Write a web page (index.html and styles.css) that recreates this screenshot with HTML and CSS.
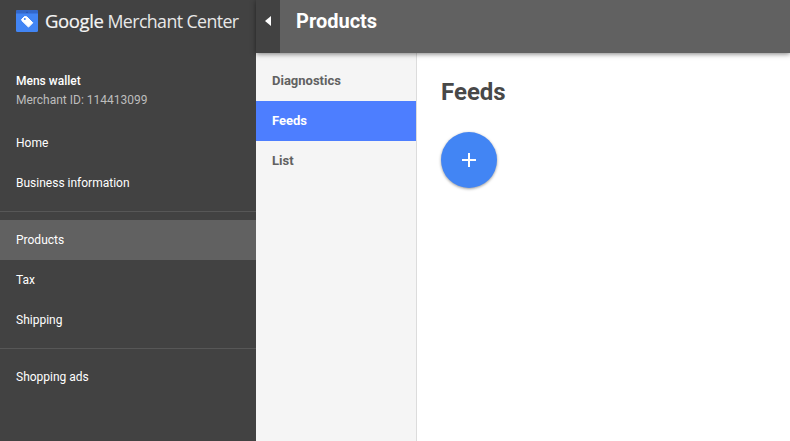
FILE: index.html
```html
<!DOCTYPE html>
<html lang="en">
<head>
<meta charset="utf-8">
<title>Google Merchant Center</title>
<link rel="stylesheet" href="styles.css">
</head>
<body>
<div class="app">
  <aside class="sidebar">
    <div class="brand">
      <svg class="brand-icon" width="22" height="22" viewBox="0 0 22 22" aria-hidden="true">
        <rect x="0" y="0" width="22" height="22" rx="1.5" fill="#4285f4"/>
        <path d="M0 1.500A1.500 1.500 0 0 1 1.500 0H20.500A1.500 1.500 0 0 1 22 1.500V3.500H0Z" fill="#3367c9"/>
        <path d="M10 2.500a1.200 1.200 0 0 1 2 0Z" fill="#22418a"/>
        <path d="M5.500 9.500L8.500 6.500L10.800 6.800L16.800 12.800L12.500 17.100L6 10.800Z" fill="#fff" stroke="#fff" stroke-width="1" stroke-linejoin="round"/>
        <circle cx="8.800" cy="9" r="1" fill="#4285f4"/>
      </svg>
      <span class="brand-text"><span class="brand-google">Google</span> Merchant Center</span>
    </div>
    <div class="account">
      <div class="account-name">Mens wallet</div>
      <div class="account-id">Merchant ID: 114413099</div>
    </div>
    <nav class="nav-group">
      <a class="nav-item">Home</a>
      <a class="nav-item">Business information</a>
    </nav>
    <nav class="nav-group nav-divided">
      <a class="nav-item nav-active">Products</a>
      <a class="nav-item">Tax</a>
      <a class="nav-item">Shipping</a>
    </nav>
    <nav class="nav-group nav-divided">
      <a class="nav-item">Shopping ads</a>
    </nav>
  </aside>
  <div class="main">
    <header class="topbar">
      <button class="toggle" aria-label="Collapse menu">
        <svg width="6" height="10" viewBox="0 0 6 10" aria-hidden="true"><path d="M6 0V10L0 5Z" fill="#fff"/></svg>
      </button>
      <h1 class="page-title">Products</h1>
    </header>
    <div class="body">
      <nav class="subnav">
        <a class="subnav-item">Diagnostics</a>
        <a class="subnav-item subnav-active">Feeds</a>
        <a class="subnav-item">List</a>
      </nav>
      <main class="content">
        <h2 class="content-title">Feeds</h2>
        <button class="fab" aria-label="Add feed">
          <svg width="14" height="14" viewBox="0 0 14 14" aria-hidden="true"><path d="M6 0H8V6H14V8H8V14H6V8H0V6H6Z" fill="#fff"/></svg>
        </button>
      </main>
    </div>
  </div>
</div>
</body>
</html>
```
FILE: styles.css
```css
* { box-sizing: border-box; }
html, body { margin: 0; height: 100%; overflow: hidden; }
body { font-family: Roboto, "Liberation Sans", sans-serif; background: #fff; }
.app { display: flex; width: 790px; height: 441px; }

.sidebar { width: 256px; flex: none; background: #424242; color: #fff; font-size: 12px; }
.brand { height: 43px; padding: 10px 0 0 16px; display: flex; align-items: flex-start; gap: 7px; }
.brand-icon { flex: none; }
.brand-text { font-family: "Open Sans", sans-serif; font-size: 17.800px; line-height: 22px; letter-spacing: -0.600px; color: #e8e8e8; white-space: nowrap; }
.brand-google { font-size: 18.500px; letter-spacing: -0.400px; color: #f5f5f5; -webkit-text-stroke: 0.200px #f5f5f5; }
.account { padding: 29px 16px 0; height: 80px; line-height: 19px; }
.account-name { font-weight: 500; color: #fff; }
.account-id { color: #bdbdbd; }
.nav-divided { border-top: 1px solid #575757; margin-top: 8px; padding-top: 8px; }
.nav-item { display: block; height: 40px; line-height: 40px; padding-left: 16px; color: #fff; }
.nav-active { background: #616161; }

.main { flex: 1; min-width: 0; display: flex; flex-direction: column; }
.topbar { height: 53px; flex: none; background: #616161; display: flex; align-items: flex-start; box-shadow: 0 1px 5px rgba(0,0,0,.5); position: relative; z-index: 1; }
.toggle { width: 24px; height: 53px; border: 0; padding: 0 0 11px; background: #424242; display: flex; align-items: center; justify-content: center; }
.page-title { margin: 8px 0 0 16px; font-size: 20px; line-height: 26px; font-weight: 700; color: #fff; }

.body { flex: 1; display: flex; min-height: 0; }
.subnav { width: 161px; flex: none; background: #f5f5f5; border-right: 1px solid #dcdcdc; padding-top: 8px; }
.subnav-item { display: block; height: 40px; line-height: 40px; padding-left: 16px; font-size: 13px; font-weight: 700; color: #616161; }
.subnav-active { background: #4d7eff; color: #fff; }

.content { flex: 1; padding: 0 24px; }
.content-title { margin: 24px 0 25px; font-size: 24px; line-height: 30px; font-weight: 700; color: #484848; }
.fab { width: 56px; height: 56px; border: 0; padding: 0; border-radius: 50%; background: #4285f4; display: flex; align-items: center; justify-content: center; box-shadow: 0 1px 3px rgba(0,0,0,.4); }
```
